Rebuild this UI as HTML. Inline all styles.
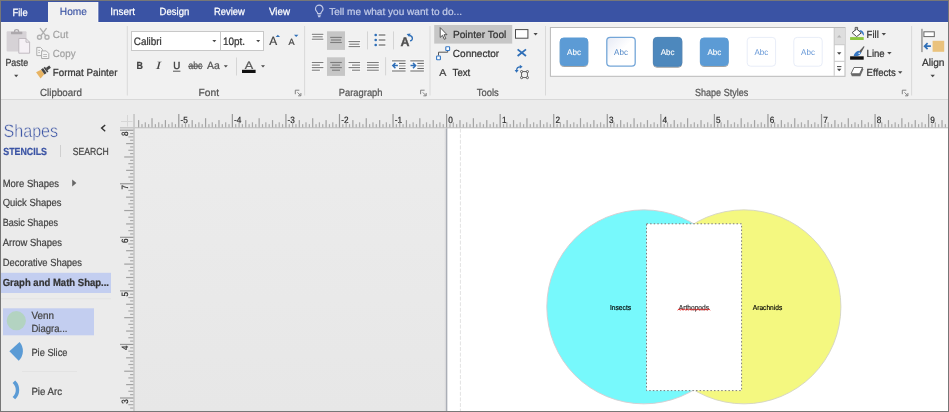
<!DOCTYPE html>
<html lang="en"><head><meta charset="utf-8"><title>Visio - Venn Diagram</title>
<style>
html,body{margin:0;padding:0;background:#fff;overflow:hidden}
#app{position:relative;width:949px;height:412px;overflow:hidden;font-family:"Liberation Sans", sans-serif}
svg{position:absolute;left:0;top:0;display:block;will-change:transform}
svg text{font-family:"Liberation Sans", sans-serif;white-space:pre;text-rendering:geometricPrecision}
</style></head><body>
<div id="app">
<svg width="949" height="412" viewBox="0 0 949 412">
<rect x="0" y="0" width="949" height="412" fill="#777" />
<rect x="1" y="1" width="947" height="410" fill="#ebebeb" />
<rect x="1" y="1" width="947" height="21" fill="#3a53a4" />
<rect x="1" y="22" width="947" height="77" fill="#f1f1f1" />
<rect x="1" y="22" width="947" height="1" fill="#f6f6f6" />
<rect x="1" y="99" width="947" height="1" fill="#d8d8d8" />
<rect x="48" y="2" width="50.2" height="21.5" fill="#f1f1f1" />
<rect x="97.2" y="2" width="1" height="20" fill="#f8f8f8" />
<text x="12.5" y="15.7" font-size="10.4" fill="#fff" font-weight="normal" font-style="normal" textLength="15.2" lengthAdjust="spacingAndGlyphs" stroke="#fff" stroke-width="0.25">File</text>
<text x="59.8" y="15.2" font-size="10.4" fill="#3a53a4" font-weight="normal" font-style="normal" textLength="27.1" lengthAdjust="spacingAndGlyphs" stroke="#3a53a4" stroke-width="0.15">Home</text>
<text x="110.3" y="15.2" font-size="10.4" fill="#fff" font-weight="normal" font-style="normal" textLength="24.8" lengthAdjust="spacingAndGlyphs" stroke="#fff" stroke-width="0.25">Insert</text>
<text x="159.6" y="15.2" font-size="10.4" fill="#fff" font-weight="normal" font-style="normal" textLength="29.7" lengthAdjust="spacingAndGlyphs" stroke="#fff" stroke-width="0.25">Design</text>
<text x="214" y="15.2" font-size="10.4" fill="#fff" font-weight="normal" font-style="normal" textLength="30.8" lengthAdjust="spacingAndGlyphs" stroke="#fff" stroke-width="0.25">Review</text>
<text x="269" y="15.2" font-size="10.4" fill="#fff" font-weight="normal" font-style="normal" textLength="21" lengthAdjust="spacingAndGlyphs" stroke="#fff" stroke-width="0.25">View</text>
<text x="329.2" y="15.3" font-size="10" fill="#c3cbe8" font-weight="normal" font-style="normal" textLength="132.8" lengthAdjust="spacingAndGlyphs"  stroke="#c3cbe8" stroke-width="0.22">Tell me what you want to do...</text>
<g fill="none" stroke="#c3cbe8" stroke-width="1.15"><path d="M317.7 13.6c0-1.7-2.2-2.6-2.2-4.7a3.75 3.75 0 0 1 7.5 0c0 2.1-2.2 3-2.2 4.7z"/><path d="M317.7 15.2h3.1M318.1 16.6h2.3"/></g>
<rect x="126.8" y="26" width="1" height="69.5" fill="#d9d9d9" />
<rect x="304.1" y="26" width="1" height="69.5" fill="#d9d9d9" />
<rect x="429.5" y="26" width="1" height="69.5" fill="#d9d9d9" />
<rect x="545.0" y="26" width="1" height="69.5" fill="#d9d9d9" />
<rect x="911.1" y="26" width="1" height="69.5" fill="#d9d9d9" />
<text x="40" y="95.6" font-size="10.3" fill="#555" font-weight="normal" font-style="normal" textLength="42" lengthAdjust="spacingAndGlyphs"  stroke="#555" stroke-width="0.22">Clipboard</text>
<text x="198.5" y="95.6" font-size="10.3" fill="#555" font-weight="normal" font-style="normal" textLength="20.5" lengthAdjust="spacingAndGlyphs"  stroke="#555" stroke-width="0.22">Font</text>
<text x="338.8" y="95.6" font-size="10.3" fill="#555" font-weight="normal" font-style="normal" textLength="43.7" lengthAdjust="spacingAndGlyphs"  stroke="#555" stroke-width="0.22">Paragraph</text>
<text x="476.7" y="95.6" font-size="10.3" fill="#555" font-weight="normal" font-style="normal" textLength="22" lengthAdjust="spacingAndGlyphs"  stroke="#555" stroke-width="0.22">Tools</text>
<text x="695" y="95.6" font-size="10.3" fill="#555" font-weight="normal" font-style="normal" textLength="53.3" lengthAdjust="spacingAndGlyphs"  stroke="#555" stroke-width="0.22">Shape Styles</text>
<g stroke="#777" stroke-width="0.9" fill="none"><path d="M295.3 94.2V90.2H299.3"/><path d="M297.5 92.4L300.6 95.5"/><path d="M300.90000000000003 93.0V95.8H298.1" /></g>
<g stroke="#777" stroke-width="0.9" fill="none"><path d="M420.6 94.2V90.2H424.6"/><path d="M422.8 92.4L425.90000000000003 95.5"/><path d="M426.20000000000005 93.0V95.8H423.40000000000003" /></g>
<g stroke="#777" stroke-width="0.9" fill="none"><path d="M902.3 94.2V90.2H906.3"/><path d="M904.5 92.4L907.5999999999999 95.5"/><path d="M907.9 93.0V95.8H905.0999999999999" /></g>
<g><rect x="6.6" y="31.3" width="19.9" height="20.2" rx="1" fill="#d6d2d6"/><rect x="11" y="31.7" width="11.3" height="2.5" rx="0.4" fill="#aca8ac"/><path d="M14.6 32v-0.8a2 1.6 0 0 1 4 0v0.8" fill="none" stroke="#aca8ac" stroke-width="1.3"/><path d="M18.8 38.5h7.2l3.6 3.7v11h-10.8z" fill="#f5f0f5" stroke="#bbb6bb" stroke-width="0.9"/><path d="M26 38.5v3.7h3.6" fill="none" stroke="#bbb6bb" stroke-width="0.9"/></g>
<text x="5.4" y="66.3" font-size="10.3" fill="#3c3c3c" font-weight="normal" font-style="normal" textLength="22.8" lengthAdjust="spacingAndGlyphs"  stroke="#3c3c3c" stroke-width="0.22">Paste</text>
<path d="M14.1 74.8h4.2l-2.1 2.4z" fill="#484848" stroke="none" stroke-width="1" />
<g fill="none" stroke="#b0b0b0" stroke-width="1.4"><path d="M40 28.2l5.6 7.4M46.6 28.2l-5.6 7.4"/><circle cx="39.5" cy="37.3" r="2"/><circle cx="47" cy="37.3" r="2"/></g>
<text x="52.8" y="37.7" font-size="10.3" fill="#a3a3a3" font-weight="normal" font-style="normal" textLength="15.5" lengthAdjust="spacingAndGlyphs"  stroke="#a3a3a3" stroke-width="0.22">Cut</text>
<g fill="#f5f5f5" stroke="#adadad" stroke-width="1"><path d="M36.8 47.4h3.6l2 2v6.2h-5.6z"/><path d="M41.6 50.9h4.6l2.6 2.6v5h-7.2z"/><path d="M38.2 50.4h1.8M38.2 52.6h1.8M43.2 54.5h3.8M43.2 56.5h3.8" fill="none" stroke-width="0.8"/></g>
<text x="52.8" y="57" font-size="10.3" fill="#a3a3a3" font-weight="normal" font-style="normal" textLength="22.7" lengthAdjust="spacingAndGlyphs"  stroke="#a3a3a3" stroke-width="0.22">Copy</text>
<g transform="rotate(-36 43.6 71.4)"><path d="M37 67.7l5.4 0.9v5.6l-5.4 1.1z" fill="#e8b463"/><rect x="42.6" y="68.4" width="2.5" height="6" fill="#454545"/><rect x="45.8" y="68.4" width="1.6" height="6" fill="#454545"/><rect x="47.4" y="70" width="4.2" height="2.8" fill="#454545"/></g>
<text x="52.8" y="76" font-size="10.3" fill="#333" font-weight="normal" font-style="normal" textLength="64.7" lengthAdjust="spacingAndGlyphs"  stroke="#333" stroke-width="0.22">Format Painter</text>
<rect x="131.5" y="31.5" width="89" height="19" fill="#fff" stroke="#c8c8c8" stroke-width="1"/>
<rect x="220.5" y="31.5" width="43" height="19" fill="#fff" stroke="#c8c8c8" stroke-width="1"/>
<text x="133.8" y="45.2" font-size="10.8" fill="#333" font-weight="normal" font-style="normal" textLength="28" lengthAdjust="spacingAndGlyphs"  stroke="#333" stroke-width="0.22">Calibri</text>
<text x="222.9" y="45.2" font-size="10.8" fill="#333" font-weight="normal" font-style="normal" textLength="22.1" lengthAdjust="spacingAndGlyphs"  stroke="#333" stroke-width="0.22">10pt.</text>
<path d="M212.3 40.1h4l-2.0 2.2z" fill="#484848" stroke="none" stroke-width="1" />
<path d="M256.2 40.1h4l-2.0 2.2z" fill="#484848" stroke="none" stroke-width="1" />
<text x="269.3" y="45.2" font-size="11.9" fill="#444" font-weight="normal" font-style="normal" textLength="7.9" lengthAdjust="spacingAndGlyphs"  stroke="#444" stroke-width="0.22">A</text>
<path d="M275.7 37.1l2.15-2.3 2.15 2.3z" fill="#2f6fb8" stroke="none" stroke-width="1" />
<text x="288.5" y="45.2" font-size="9" fill="#444" font-weight="normal" font-style="normal" textLength="6.1" lengthAdjust="spacingAndGlyphs"  stroke="#444" stroke-width="0.22">A</text>
<path d="M294 34.7h4.4l-2.2 2.3z" fill="#2f6fb8" stroke="none" stroke-width="1" />
<text x="136.5" y="69.4" font-size="10.3" fill="#444" font-weight="bold" font-style="normal" textLength="6.4" lengthAdjust="spacingAndGlyphs"  stroke="#444" stroke-width="0.22">B</text>
<text x="155.7" y="69.4" font-size="11" fill="#444" textLength="5.4" lengthAdjust="spacingAndGlyphs" style="font-family:'Liberation Serif',serif;font-style:italic">I</text>
<text x="173.2" y="69.4" font-size="10.3" fill="#444" font-weight="normal" font-style="normal" textLength="7" lengthAdjust="spacingAndGlyphs" stroke="#444" stroke-width="0.45">U</text>
<rect x="173" y="70.7" width="7.4" height="1" fill="#555" />
<text x="188.6" y="69.4" font-size="10.4" fill="#555" font-weight="normal" font-style="normal" textLength="13.6" lengthAdjust="spacingAndGlyphs"  stroke="#555" stroke-width="0.22">abc</text>
<rect x="188" y="65.7" width="14.8" height="1" fill="#555" />
<text x="207" y="69.4" font-size="10.5" fill="#555" font-weight="normal" font-style="normal" textLength="12.8" lengthAdjust="spacingAndGlyphs"  stroke="#555" stroke-width="0.22">Aa</text>
<path d="M223.8 65.30000000000001h4l-2.0 2.2z" fill="#484848" stroke="none" stroke-width="1" />
<rect x="236" y="57.5" width="1" height="18" fill="#d6d6d6" />
<text x="244.7" y="69" font-size="10.8" fill="#555" font-weight="normal" font-style="normal" textLength="8.4" lengthAdjust="spacingAndGlyphs"  stroke="#555" stroke-width="0.22">A</text>
<rect x="242" y="69.8" width="13.6" height="3.2" fill="#111" />
<path d="M261.0 65.30000000000001h4l-2.0 2.2z" fill="#484848" stroke="none" stroke-width="1" />
<rect x="327" y="31.3" width="18" height="18.6" fill="#c6c6c6" />
<rect x="327" y="57.3" width="18" height="18.6" fill="#c6c6c6" />
<rect x="311.0" y="33.0" width="13.2" height="2.6" fill="#fafafa" />
<rect x="311.7" y="35.5" width="11.8" height="2.6" fill="#fafafa" />
<rect x="311.0" y="37.9" width="13.2" height="2.6" fill="#fafafa" />
<rect x="311.8" y="33.75" width="11.6" height="1.1" fill="#7c7c7c" />
<rect x="312.5" y="36.25" width="10.2" height="1.1" fill="#7c7c7c" />
<rect x="311.8" y="38.65" width="11.6" height="1.1" fill="#7c7c7c" />
<rect x="330.2" y="36.85" width="11.6" height="1.1" fill="#7c7c7c" />
<rect x="330.9" y="39.45" width="10.2" height="1.1" fill="#7c7c7c" />
<rect x="330.2" y="41.95" width="11.6" height="1.1" fill="#7c7c7c" />
<rect x="347.7" y="40.3" width="13.2" height="2.6" fill="#fafafa" />
<rect x="348.4" y="42.9" width="11.8" height="2.6" fill="#fafafa" />
<rect x="347.7" y="45.3" width="13.2" height="2.6" fill="#fafafa" />
<rect x="348.5" y="41.05" width="11.6" height="1.1" fill="#7c7c7c" />
<rect x="349.2" y="43.65" width="10.2" height="1.1" fill="#7c7c7c" />
<rect x="348.5" y="46.05" width="11.6" height="1.1" fill="#7c7c7c" />
<rect x="367" y="31.4" width="1" height="18" fill="#d4d4d4" />
<rect x="378" y="33.5" width="8" height="3" fill="#fafafa" />
<rect x="378" y="38.5" width="8" height="3" fill="#fafafa" />
<rect x="378" y="43.5" width="8" height="3" fill="#fafafa" />
<circle cx="375.7" cy="35" r="1.3" fill="#2f6fb8"/>
<rect x="378.7" y="34.2" width="6.7" height="1.6" fill="#8c8c8c" />
<circle cx="375.7" cy="40" r="1.3" fill="#2f6fb8"/>
<rect x="378.7" y="39.2" width="6.7" height="1.6" fill="#8c8c8c" />
<circle cx="375.7" cy="45" r="1.3" fill="#2f6fb8"/>
<rect x="378.7" y="44.2" width="6.7" height="1.6" fill="#8c8c8c" />
<rect x="393" y="31.4" width="1" height="18" fill="#d4d4d4" />
<text x="400.5" y="46" font-size="12.4" fill="#4f4f4f" font-weight="bold" font-style="normal" textLength="9" lengthAdjust="spacingAndGlyphs" stroke="#4f4f4f" stroke-width="0.35">A</text>
<path d="M410 40.8c3-0.6 3.6-4 -0.6-5.6" fill="none" stroke="#2f6fb8" stroke-width="1.3" />
<path d="M406.6 34l4-0.6-1.4 3.6z" fill="#2f6fb8" stroke="none" stroke-width="1" />
<rect x="311.0" y="61.2" width="13.2" height="2.6" fill="#fafafa" />
<rect x="311.0" y="63.8" width="9.7" height="2.6" fill="#fafafa" />
<rect x="311.0" y="66.3" width="13.2" height="2.6" fill="#fafafa" />
<rect x="311.0" y="68.9" width="9.7" height="2.6" fill="#fafafa" />
<rect x="311.8" y="61.95" width="11.6" height="1.1" fill="#7c7c7c" />
<rect x="311.8" y="64.55" width="8.1" height="1.1" fill="#7c7c7c" />
<rect x="311.8" y="67.05" width="11.6" height="1.1" fill="#7c7c7c" />
<rect x="311.8" y="69.65" width="8.1" height="1.1" fill="#7c7c7c" />
<rect x="330.2" y="61.95" width="11.6" height="1.1" fill="#7c7c7c" />
<rect x="332.0" y="64.55" width="8" height="1.1" fill="#7c7c7c" />
<rect x="330.2" y="67.05" width="11.6" height="1.1" fill="#7c7c7c" />
<rect x="332.0" y="69.65" width="8" height="1.1" fill="#7c7c7c" />
<rect x="347.7" y="61.2" width="13.2" height="2.6" fill="#fafafa" />
<rect x="351.2" y="63.8" width="9.7" height="2.6" fill="#fafafa" />
<rect x="347.7" y="66.3" width="13.2" height="2.6" fill="#fafafa" />
<rect x="351.2" y="68.9" width="9.7" height="2.6" fill="#fafafa" />
<rect x="348.5" y="61.95" width="11.6" height="1.1" fill="#7c7c7c" />
<rect x="352.0" y="64.55" width="8.1" height="1.1" fill="#7c7c7c" />
<rect x="348.5" y="67.05" width="11.6" height="1.1" fill="#7c7c7c" />
<rect x="352.0" y="69.65" width="8.1" height="1.1" fill="#7c7c7c" />
<rect x="366.1" y="61.2" width="13.5" height="2.6" fill="#fafafa" />
<rect x="366.1" y="63.8" width="13.5" height="2.6" fill="#fafafa" />
<rect x="366.1" y="66.3" width="13.5" height="2.6" fill="#fafafa" />
<rect x="366.1" y="68.9" width="13.5" height="2.6" fill="#fafafa" />
<rect x="366.9" y="61.95" width="11.9" height="1.1" fill="#7c7c7c" />
<rect x="366.9" y="64.55" width="11.9" height="1.1" fill="#7c7c7c" />
<rect x="366.9" y="67.05" width="11.9" height="1.1" fill="#7c7c7c" />
<rect x="366.9" y="69.65" width="11.9" height="1.1" fill="#7c7c7c" />
<rect x="385.1" y="57.2" width="1" height="18.2" fill="#d4d4d4" />
<rect x="391.5" y="59.6" width="14.6" height="12.6" fill="#fafafa" />
<rect x="392" y="60" width="13.6" height="1.6" fill="#9c9c9c" />
<rect x="392" y="70.2" width="13.6" height="1.6" fill="#9c9c9c" />
<rect x="399" y="62.85" width="6.6" height="1.1" fill="#6a6a6a" />
<rect x="399" y="65.35000000000001" width="6.6" height="1.1" fill="#9c9c9c" />
<rect x="399" y="67.95" width="6.6" height="1.1" fill="#6a6a6a" />
<path d="M397.9 65.6H393M395.4 63L392.8 65.6L395.4 68.2" fill="none" stroke="#2f6fb8" stroke-width="1.5" />
<rect x="409.8" y="59.6" width="14.6" height="12.6" fill="#fafafa" />
<rect x="410.3" y="60" width="13.6" height="1.6" fill="#9c9c9c" />
<rect x="410.3" y="70.2" width="13.6" height="1.6" fill="#9c9c9c" />
<rect x="417.3" y="62.85" width="6.6" height="1.1" fill="#6a6a6a" />
<rect x="417.3" y="65.35000000000001" width="6.6" height="1.1" fill="#9c9c9c" />
<rect x="417.3" y="67.95" width="6.6" height="1.1" fill="#6a6a6a" />
<path d="M410.5 65.6H415.3M413.0 63L415.6 65.6L413.0 68.2" fill="none" stroke="#2f6fb8" stroke-width="1.5" />
<rect x="434.2" y="25" width="78" height="18.6" fill="#c6c6c6" />
<path d="M440.2 27.6v9.8l2.3-2.1 1.8 4 1.5-0.7-1.8-3.9h3z" fill="#fff" stroke="#4a4a4a" stroke-width="0.9" />
<text x="452.9" y="37.9" font-size="10.3" fill="#333" font-weight="normal" font-style="normal" textLength="53.5" lengthAdjust="spacingAndGlyphs"  stroke="#333" stroke-width="0.22">Pointer Tool</text>
<rect x="515.5" y="29.6" width="12.4" height="8.6" fill="#fff" stroke="#4a4a4a" stroke-width="1"/>
<path d="M533.5 33.05h4.2l-2.1 2.5z" fill="#484848" stroke="none" stroke-width="1" />
<g fill="#fff" stroke="#3577c4" stroke-width="1.1"><path d="M438.5 55.6v-3.4h9.2v-1.6" fill="none" stroke="#555" stroke-width="1"/><rect x="436.6" y="56" width="3.8" height="3.8" rx="0.6"/><rect x="445.8" y="46.7" width="3.8" height="3.8" rx="0.6"/></g>
<text x="452.8" y="57" font-size="10.3" fill="#333" font-weight="normal" font-style="normal" textLength="46.4" lengthAdjust="spacingAndGlyphs"  stroke="#333" stroke-width="0.22">Connector</text>
<path d="M517.6 49.4l8.4 6.6M526 49.4l-8.4 6.6" fill="none" stroke="#2f6fb8" stroke-width="1.8" />
<text x="439.2" y="75.6" font-size="10" fill="#444" font-weight="normal" font-style="normal" textLength="7.1" lengthAdjust="spacingAndGlyphs"  stroke="#444" stroke-width="0.22">A</text>
<text x="452.6" y="76.1" font-size="10.3" fill="#333" font-weight="normal" font-style="normal" textLength="17.7" lengthAdjust="spacingAndGlyphs"  stroke="#333" stroke-width="0.22">Text</text>
<g fill="#f1f1f1" stroke="#555" stroke-width="0.9"><rect x="521.6" y="71.6" width="5.8" height="6" fill="none"/><circle cx="521.6" cy="71.6" r="1.1"/><circle cx="527.4" cy="71.6" r="1.1"/><circle cx="521.6" cy="77.6" r="1.1"/><circle cx="527.4" cy="77.6" r="1.1"/></g>
<path d="M516.6 70.4c0-2.6 1.4-3.6 3.6-3.6" fill="none" stroke="#2f6fb8" stroke-width="1.3" />
<path d="M519.8 64.8l2.8 2-2.8 2z" fill="#2f6fb8" stroke="none" stroke-width="1" />
<path d="M514.6 70l2 2.8 2-2.8z" fill="#2f6fb8" stroke="none" stroke-width="1" />
<rect x="550.4" y="27.5" width="294.6" height="48.8" fill="#fff" stroke="#b9b9b9" stroke-width="1"/>
<defs><filter id="sh" x="-20%" y="-20%" width="140%" height="150%"><feGaussianBlur in="SourceAlpha" stdDeviation="0.7"/><feOffset dy="0.7"/><feComponentTransfer><feFuncA type="linear" slope="0.38"/></feComponentTransfer><feMerge><feMergeNode/><feMergeNode in="SourceGraphic"/></feMerge></filter><linearGradient id="g2" x1="0" y1="0" x2="1" y2="1"><stop offset="0" stop-color="#e6eaf5"/><stop offset="0.5" stop-color="#fff"/></linearGradient></defs>
<rect x="560.2" y="38" width="27.6" height="27.4" rx="3.4" fill="#5b9bd5" stroke="#5b9bd5" stroke-width="1" filter="url(#sh)"/>
<text x="567.1" y="54.7" font-size="8.3" fill="#fff" font-weight="normal" font-style="normal" textLength="13.8" lengthAdjust="spacingAndGlyphs" stroke="#fff" stroke-width="0.12">Abc</text>
<rect x="606.8" y="37.4" width="28.4" height="28.8" rx="3.4" fill="url(#g2)" stroke="#74a6d8" stroke-width="1.3"/>
<text x="614.1" y="54.7" font-size="8.3" fill="#4f86c6" font-weight="normal" font-style="normal" textLength="13.8" lengthAdjust="spacingAndGlyphs" stroke="none">Abc</text>
<rect x="653.4" y="37.4" width="28.4" height="28.8" rx="3.4" fill="#4e88bd" stroke="#4a82b6" stroke-width="1" filter="url(#sh)"/>
<text x="660.7" y="54.7" font-size="8.3" fill="#fff" font-weight="normal" font-style="normal" textLength="13.8" lengthAdjust="spacingAndGlyphs" stroke="#fff" stroke-width="0.12">Abc</text>
<rect x="700.4" y="38" width="27.8" height="27.4" rx="3.4" fill="#5b9bd5" stroke="#5b9bd5" stroke-width="1" filter="url(#sh)"/>
<text x="707.4" y="54.7" font-size="8.3" fill="#fff" font-weight="normal" font-style="normal" textLength="13.8" lengthAdjust="spacingAndGlyphs" stroke="#fff" stroke-width="0.12">Abc</text>
<rect x="747.2" y="37.4" width="28.4" height="28.8" rx="3.4" fill="#fff" stroke="#e8edf8" stroke-width="1"/>
<text x="754.5" y="54.7" font-size="8.3" fill="#6496d6" font-weight="normal" font-style="normal" textLength="13.8" lengthAdjust="spacingAndGlyphs" stroke="none">Abc</text>
<rect x="793.8" y="37.4" width="28.4" height="28.8" rx="3.4" fill="#fff" stroke="#e8edf8" stroke-width="1"/>
<text x="801.1" y="54.7" font-size="8.3" fill="#6496d6" font-weight="normal" font-style="normal" textLength="13.8" lengthAdjust="spacingAndGlyphs" stroke="none">Abc</text>
<rect x="834.2" y="28" width="10.3" height="16.4" fill="#dedede" />
<rect x="833.7" y="28" width="1" height="47.8" fill="#c6c6c6" />
<rect x="834.2" y="44.2" width="10.4" height="1" fill="#c6c6c6" />
<rect x="834.2" y="60.8" width="10.4" height="1" fill="#c6c6c6" />
<path d="M837 37.4h4.4l-2.2-2.5z" fill="#b4b4b4" stroke="none" stroke-width="1" />
<path d="M837.0 52.25h4.4l-2.2 2.5z" fill="#484848" stroke="none" stroke-width="1" />
<rect x="837" y="66.1" width="4.4" height="1" fill="#484848" />
<path d="M837.0 68.75h4.4l-2.2 2.5z" fill="#484848" stroke="none" stroke-width="1" />
<g><rect x="850.1" y="37.1" width="13.6" height="2.9" fill="#8cc63f"/><path d="M852.1 32.7l4.5-3.7 4.7 3.9-4.7 3.7z" fill="#fff" stroke="#4a4a4a" stroke-width="1"/><path d="M855.2 30.4v-3h2.4v2.4" fill="none" stroke="#4a4a4a" stroke-width="0.9"/><path d="M859.4 29.9c3.2 0.2 4.9 2.4 4.5 5.9-1.6-1.3-1.4-3-3.7-4z" fill="#3577c4"/></g>
<text x="866.6" y="37.9" font-size="10.3" fill="#333" font-weight="normal" font-style="normal" textLength="12.2" lengthAdjust="spacingAndGlyphs"  stroke="#333" stroke-width="0.22">Fill</text>
<path d="M881.5999999999999 33.05h4.4l-2.2 2.5z" fill="#484848" stroke="none" stroke-width="1" />
<g><rect x="850.1" y="56.3" width="13.6" height="3.4" fill="#111"/><path d="M863.9 46l-4.9 5.5 1.9 1.7 3.6-6.4z" fill="#5c5c5c"/><path d="M853.6 56c0.6-3 2.8-5 5.3-5.3l2.2 2c-0.4 2.2-3.3 3.8-7.5 3.3z" fill="#3577c4"/><circle cx="859.2" cy="53.2" r="0.8" fill="#fff"/></g>
<text x="866.6" y="57" font-size="10.3" fill="#333" font-weight="normal" font-style="normal" textLength="18.1" lengthAdjust="spacingAndGlyphs"  stroke="#333" stroke-width="0.22">Line</text>
<path d="M887.1999999999999 52.05h4.4l-2.2 2.5z" fill="#484848" stroke="none" stroke-width="1" />
<g><path d="M851 74.2l0.9 2h8.4l3-6.6-0.8-2.2z" fill="#6e6e6e"/><path d="M854 67.5h8.6l-3 6.3h-8.6z" fill="#fff" stroke="#5a5a5a" stroke-width="0.9" stroke-linejoin="round"/></g>
<text x="866.6" y="76.3" font-size="10.3" fill="#333" font-weight="normal" font-style="normal" textLength="29.1" lengthAdjust="spacingAndGlyphs"  stroke="#333" stroke-width="0.22">Effects</text>
<path d="M898.0 71.25h4.4l-2.2 2.5z" fill="#484848" stroke="none" stroke-width="1" />
<g><rect x="921.3" y="28.8" width="1.3" height="23.3" fill="#8a8a8a"/><rect x="923.9" y="31.8" width="10.4" height="4.8" fill="#fff" stroke="#666" stroke-width="1"/><rect x="932.6" y="40.8" width="11.6" height="11" fill="#eac27c"/><path d="M930.9 46.2h-5.6M927.6 43.2l-3 3 3 3" fill="none" stroke="#2f6fb8" stroke-width="1.7"/></g>
<text x="921.9" y="66.4" font-size="10.4" fill="#333" font-weight="normal" font-style="normal" textLength="22.6" lengthAdjust="spacingAndGlyphs"  stroke="#333" stroke-width="0.22">Align</text>
<path d="M930.5 74.65h4.4l-2.2 2.5z" fill="#484848" stroke="none" stroke-width="1" />
<text x="3.4" y="136.6" font-size="18" fill="#3a53a4" font-weight="normal" font-style="normal" textLength="54.8" lengthAdjust="spacingAndGlyphs" stroke="#ebebeb" stroke-width="0.45">Shapes</text>
<path d="M105.2 125l-3.6 3.1 3.6 3.1" fill="none" stroke="#333" stroke-width="1.4" />
<text x="3.3" y="154.8" font-size="10.3" fill="#3a53a4" font-weight="bold" font-style="normal" textLength="43.7" lengthAdjust="spacingAndGlyphs"  stroke="#3a53a4" stroke-width="0.22">STENCILS</text>
<rect x="60" y="145" width="1" height="12" fill="#cfcfcf" />
<text x="72.7" y="154.8" font-size="10.3" fill="#444" font-weight="normal" font-style="normal" textLength="36" lengthAdjust="spacingAndGlyphs"  stroke="#444" stroke-width="0.22">SEARCH</text>
<text x="2.7" y="186.9" font-size="10.4" fill="#444" font-weight="normal" font-style="normal" textLength="56.3" lengthAdjust="spacingAndGlyphs"  stroke="#444" stroke-width="0.22">More Shapes</text>
<path d="M72.2 179.4v7.2l4.2-3.6z" fill="#666" stroke="none" stroke-width="1" />
<text x="2.7" y="206" font-size="10.4" fill="#444" font-weight="normal" font-style="normal" textLength="58.7" lengthAdjust="spacingAndGlyphs"  stroke="#444" stroke-width="0.22">Quick Shapes</text>
<text x="2.7" y="226.3" font-size="10.4" fill="#444" font-weight="normal" font-style="normal" textLength="55.3" lengthAdjust="spacingAndGlyphs"  stroke="#444" stroke-width="0.22">Basic Shapes</text>
<text x="2.7" y="246.3" font-size="10.4" fill="#444" font-weight="normal" font-style="normal" textLength="59.3" lengthAdjust="spacingAndGlyphs"  stroke="#444" stroke-width="0.22">Arrow Shapes</text>
<text x="2.7" y="266.2" font-size="10.4" fill="#444" font-weight="normal" font-style="normal" textLength="79.3" lengthAdjust="spacingAndGlyphs"  stroke="#444" stroke-width="0.22">Decorative Shapes</text>
<rect x="1" y="272.8" width="110" height="20.2" fill="#c3cef0" />
<text x="2.7" y="286.2" font-size="10.4" fill="#333" font-weight="bold" font-style="normal" textLength="106.3" lengthAdjust="spacingAndGlyphs"  stroke="#333" stroke-width="0.22">Graph and Math Shap...</text>
<rect x="1" y="298.3" width="110" height="1" fill="#e3e3e3" />
<rect x="3" y="308.3" width="91" height="27" fill="#c3cef0" />
<circle cx="16.3" cy="320.7" r="9.6" fill="#b3d3c1"/>
<text x="31.4" y="318.8" font-size="10.4" fill="#444" font-weight="normal" font-style="normal" textLength="22.5" lengthAdjust="spacingAndGlyphs"  stroke="#444" stroke-width="0.22">Venn</text>
<text x="31.4" y="331.5" font-size="10.4" fill="#444" font-weight="normal" font-style="normal" textLength="36.1" lengthAdjust="spacingAndGlyphs"  stroke="#444" stroke-width="0.22">Diagra...</text>
<path d="M9.4 351.3L19.6 342A13.6 13.6 0 0 1 18.7 360.7z" fill="#5b9bd5" stroke="none" stroke-width="1" />
<text x="31.4" y="356.2" font-size="10.4" fill="#444" font-weight="normal" font-style="normal" textLength="36.1" lengthAdjust="spacingAndGlyphs"  stroke="#444" stroke-width="0.22">Pie Slice</text>
<rect x="22" y="371" width="55" height="1" fill="#e3e3e3" />
<path d="M15.2 380.6A12.8 12.8 0 0 1 15.2 399.2L12.6 397A9.3 9.3 0 0 0 12.6 383z" fill="#5b9bd5" stroke="none" stroke-width="1" />
<text x="31.4" y="394.6" font-size="10.4" fill="#444" font-weight="normal" font-style="normal" textLength="30.6" lengthAdjust="spacingAndGlyphs"  stroke="#444" stroke-width="0.22">Pie Arc</text>
<rect x="127" y="115" width="1" height="11.5" fill="#d6d6d6" />
<rect x="121" y="121" width="11.5" height="1" fill="#d6d6d6" />
<rect x="120" y="127" width="828" height="1.6" fill="#c8c8c8" />
<rect x="133.2" y="114" width="1.7" height="297" fill="#c8c8c8" />
<rect x="138.03" y="120.1" width="1.2" height="7.3" fill="#a2a2a2" />
<rect x="141.38" y="124.1" width="1.2" height="3.3" fill="#aaaaaa" />
<rect x="144.72" y="122.3" width="1.2" height="5.1" fill="#aaaaaa" />
<rect x="148.07" y="124.1" width="1.2" height="3.3" fill="#aaaaaa" />
<rect x="151.42" y="118.2" width="1.2" height="9.2" fill="#a2a2a2" />
<rect x="154.77" y="124.1" width="1.2" height="3.3" fill="#aaaaaa" />
<rect x="158.12" y="122.3" width="1.2" height="5.1" fill="#aaaaaa" />
<rect x="161.46" y="124.1" width="1.2" height="3.3" fill="#aaaaaa" />
<rect x="164.81" y="120.1" width="1.2" height="7.3" fill="#a2a2a2" />
<rect x="168.16" y="124.1" width="1.2" height="3.3" fill="#aaaaaa" />
<rect x="171.51" y="122.3" width="1.2" height="5.1" fill="#aaaaaa" />
<rect x="174.85" y="124.1" width="1.2" height="3.3" fill="#aaaaaa" />
<rect x="178.2" y="114.0" width="1.2" height="13.4" fill="#989898" />
<text x="180.5" y="122.9" font-size="9.1" fill="#2a2a2a" font-weight="normal" font-style="normal" textLength="7.3" lengthAdjust="spacingAndGlyphs" stroke="#2a2a2a" stroke-width="0.2">-5</text>
<rect x="181.55" y="124.1" width="1.2" height="3.3" fill="#aaaaaa" />
<rect x="184.9" y="122.3" width="1.2" height="5.1" fill="#aaaaaa" />
<rect x="188.24" y="124.1" width="1.2" height="3.3" fill="#aaaaaa" />
<rect x="191.59" y="120.1" width="1.2" height="7.3" fill="#a2a2a2" />
<rect x="194.94" y="124.1" width="1.2" height="3.3" fill="#aaaaaa" />
<rect x="198.29" y="122.3" width="1.2" height="5.1" fill="#aaaaaa" />
<rect x="201.63" y="124.1" width="1.2" height="3.3" fill="#aaaaaa" />
<rect x="204.98" y="118.2" width="1.2" height="9.2" fill="#a2a2a2" />
<rect x="208.33" y="124.1" width="1.2" height="3.3" fill="#aaaaaa" />
<rect x="211.68" y="122.3" width="1.2" height="5.1" fill="#aaaaaa" />
<rect x="215.02" y="124.1" width="1.2" height="3.3" fill="#aaaaaa" />
<rect x="218.37" y="120.1" width="1.2" height="7.3" fill="#a2a2a2" />
<rect x="221.72" y="124.1" width="1.2" height="3.3" fill="#aaaaaa" />
<rect x="225.07" y="122.3" width="1.2" height="5.1" fill="#aaaaaa" />
<rect x="228.41" y="124.1" width="1.2" height="3.3" fill="#aaaaaa" />
<rect x="231.76" y="114.0" width="1.2" height="13.4" fill="#989898" />
<text x="234.1" y="122.9" font-size="9.1" fill="#2a2a2a" font-weight="normal" font-style="normal" textLength="7.3" lengthAdjust="spacingAndGlyphs" stroke="#2a2a2a" stroke-width="0.2">-4</text>
<rect x="235.11" y="124.1" width="1.2" height="3.3" fill="#aaaaaa" />
<rect x="238.46" y="122.3" width="1.2" height="5.1" fill="#aaaaaa" />
<rect x="241.8" y="124.1" width="1.2" height="3.3" fill="#aaaaaa" />
<rect x="245.15" y="120.1" width="1.2" height="7.3" fill="#a2a2a2" />
<rect x="248.5" y="124.1" width="1.2" height="3.3" fill="#aaaaaa" />
<rect x="251.85" y="122.3" width="1.2" height="5.1" fill="#aaaaaa" />
<rect x="255.19" y="124.1" width="1.2" height="3.3" fill="#aaaaaa" />
<rect x="258.54" y="118.2" width="1.2" height="9.2" fill="#a2a2a2" />
<rect x="261.89" y="124.1" width="1.2" height="3.3" fill="#aaaaaa" />
<rect x="265.24" y="122.3" width="1.2" height="5.1" fill="#aaaaaa" />
<rect x="268.58" y="124.1" width="1.2" height="3.3" fill="#aaaaaa" />
<rect x="271.93" y="120.1" width="1.2" height="7.3" fill="#a2a2a2" />
<rect x="275.28" y="124.1" width="1.2" height="3.3" fill="#aaaaaa" />
<rect x="278.62" y="122.3" width="1.2" height="5.1" fill="#aaaaaa" />
<rect x="281.97" y="124.1" width="1.2" height="3.3" fill="#aaaaaa" />
<rect x="285.32" y="114.0" width="1.2" height="13.4" fill="#989898" />
<text x="287.6" y="122.9" font-size="9.1" fill="#2a2a2a" font-weight="normal" font-style="normal" textLength="7.3" lengthAdjust="spacingAndGlyphs" stroke="#2a2a2a" stroke-width="0.2">-3</text>
<rect x="288.67" y="124.1" width="1.2" height="3.3" fill="#aaaaaa" />
<rect x="292.01" y="122.3" width="1.2" height="5.1" fill="#aaaaaa" />
<rect x="295.36" y="124.1" width="1.2" height="3.3" fill="#aaaaaa" />
<rect x="298.71" y="120.1" width="1.2" height="7.3" fill="#a2a2a2" />
<rect x="302.06" y="124.1" width="1.2" height="3.3" fill="#aaaaaa" />
<rect x="305.4" y="122.3" width="1.2" height="5.1" fill="#aaaaaa" />
<rect x="308.75" y="124.1" width="1.2" height="3.3" fill="#aaaaaa" />
<rect x="312.1" y="118.2" width="1.2" height="9.2" fill="#a2a2a2" />
<rect x="315.45" y="124.1" width="1.2" height="3.3" fill="#aaaaaa" />
<rect x="318.79" y="122.3" width="1.2" height="5.1" fill="#aaaaaa" />
<rect x="322.14" y="124.1" width="1.2" height="3.3" fill="#aaaaaa" />
<rect x="325.49" y="120.1" width="1.2" height="7.3" fill="#a2a2a2" />
<rect x="328.84" y="124.1" width="1.2" height="3.3" fill="#aaaaaa" />
<rect x="332.19" y="122.3" width="1.2" height="5.1" fill="#aaaaaa" />
<rect x="335.53" y="124.1" width="1.2" height="3.3" fill="#aaaaaa" />
<rect x="338.88" y="114.0" width="1.2" height="13.4" fill="#989898" />
<text x="341.2" y="122.9" font-size="9.1" fill="#2a2a2a" font-weight="normal" font-style="normal" textLength="7.3" lengthAdjust="spacingAndGlyphs" stroke="#2a2a2a" stroke-width="0.2">-2</text>
<rect x="342.23" y="124.1" width="1.2" height="3.3" fill="#aaaaaa" />
<rect x="345.57" y="122.3" width="1.2" height="5.1" fill="#aaaaaa" />
<rect x="348.92" y="124.1" width="1.2" height="3.3" fill="#aaaaaa" />
<rect x="352.27" y="120.1" width="1.2" height="7.3" fill="#a2a2a2" />
<rect x="355.62" y="124.1" width="1.2" height="3.3" fill="#aaaaaa" />
<rect x="358.97" y="122.3" width="1.2" height="5.1" fill="#aaaaaa" />
<rect x="362.31" y="124.1" width="1.2" height="3.3" fill="#aaaaaa" />
<rect x="365.66" y="118.2" width="1.2" height="9.2" fill="#a2a2a2" />
<rect x="369.01" y="124.1" width="1.2" height="3.3" fill="#aaaaaa" />
<rect x="372.36" y="122.3" width="1.2" height="5.1" fill="#aaaaaa" />
<rect x="375.7" y="124.1" width="1.2" height="3.3" fill="#aaaaaa" />
<rect x="379.05" y="120.1" width="1.2" height="7.3" fill="#a2a2a2" />
<rect x="382.4" y="124.1" width="1.2" height="3.3" fill="#aaaaaa" />
<rect x="385.75" y="122.3" width="1.2" height="5.1" fill="#aaaaaa" />
<rect x="389.09" y="124.1" width="1.2" height="3.3" fill="#aaaaaa" />
<rect x="392.44" y="114.0" width="1.2" height="13.4" fill="#989898" />
<text x="394.7" y="122.9" font-size="9.1" fill="#2a2a2a" font-weight="normal" font-style="normal" textLength="7.3" lengthAdjust="spacingAndGlyphs" stroke="#2a2a2a" stroke-width="0.2">-1</text>
<rect x="395.79" y="124.1" width="1.2" height="3.3" fill="#aaaaaa" />
<rect x="399.13" y="122.3" width="1.2" height="5.1" fill="#aaaaaa" />
<rect x="402.48" y="124.1" width="1.2" height="3.3" fill="#aaaaaa" />
<rect x="405.83" y="120.1" width="1.2" height="7.3" fill="#a2a2a2" />
<rect x="409.18" y="124.1" width="1.2" height="3.3" fill="#aaaaaa" />
<rect x="412.52" y="122.3" width="1.2" height="5.1" fill="#aaaaaa" />
<rect x="415.87" y="124.1" width="1.2" height="3.3" fill="#aaaaaa" />
<rect x="419.22" y="118.2" width="1.2" height="9.2" fill="#a2a2a2" />
<rect x="422.57" y="124.1" width="1.2" height="3.3" fill="#aaaaaa" />
<rect x="425.92" y="122.3" width="1.2" height="5.1" fill="#aaaaaa" />
<rect x="429.26" y="124.1" width="1.2" height="3.3" fill="#aaaaaa" />
<rect x="432.61" y="120.1" width="1.2" height="7.3" fill="#a2a2a2" />
<rect x="435.96" y="124.1" width="1.2" height="3.3" fill="#aaaaaa" />
<rect x="439.31" y="122.3" width="1.2" height="5.1" fill="#aaaaaa" />
<rect x="442.65" y="124.1" width="1.2" height="3.3" fill="#aaaaaa" />
<rect x="446.0" y="114.0" width="1.2" height="13.4" fill="#989898" />
<text x="448.3" y="122.9" font-size="9.1" fill="#2a2a2a" font-weight="normal" font-style="normal" textLength="4.6" lengthAdjust="spacingAndGlyphs" stroke="#2a2a2a" stroke-width="0.2">0</text>
<rect x="449.35" y="124.1" width="1.2" height="3.3" fill="#aaaaaa" />
<rect x="452.69" y="122.3" width="1.2" height="5.1" fill="#aaaaaa" />
<rect x="456.04" y="124.1" width="1.2" height="3.3" fill="#aaaaaa" />
<rect x="459.39" y="120.1" width="1.2" height="7.3" fill="#a2a2a2" />
<rect x="462.74" y="124.1" width="1.2" height="3.3" fill="#aaaaaa" />
<rect x="466.08" y="122.3" width="1.2" height="5.1" fill="#aaaaaa" />
<rect x="469.43" y="124.1" width="1.2" height="3.3" fill="#aaaaaa" />
<rect x="472.78" y="118.2" width="1.2" height="9.2" fill="#a2a2a2" />
<rect x="476.13" y="124.1" width="1.2" height="3.3" fill="#aaaaaa" />
<rect x="479.48" y="122.3" width="1.2" height="5.1" fill="#aaaaaa" />
<rect x="482.82" y="124.1" width="1.2" height="3.3" fill="#aaaaaa" />
<rect x="486.17" y="120.1" width="1.2" height="7.3" fill="#a2a2a2" />
<rect x="489.52" y="124.1" width="1.2" height="3.3" fill="#aaaaaa" />
<rect x="492.87" y="122.3" width="1.2" height="5.1" fill="#aaaaaa" />
<rect x="496.21" y="124.1" width="1.2" height="3.3" fill="#aaaaaa" />
<rect x="499.56" y="114.0" width="1.2" height="13.4" fill="#989898" />
<text x="501.9" y="122.9" font-size="9.1" fill="#2a2a2a" font-weight="normal" font-style="normal" textLength="4.6" lengthAdjust="spacingAndGlyphs" stroke="#2a2a2a" stroke-width="0.2">1</text>
<rect x="502.91" y="124.1" width="1.2" height="3.3" fill="#aaaaaa" />
<rect x="506.25" y="122.3" width="1.2" height="5.1" fill="#aaaaaa" />
<rect x="509.6" y="124.1" width="1.2" height="3.3" fill="#aaaaaa" />
<rect x="512.95" y="120.1" width="1.2" height="7.3" fill="#a2a2a2" />
<rect x="516.3" y="124.1" width="1.2" height="3.3" fill="#aaaaaa" />
<rect x="519.64" y="122.3" width="1.2" height="5.1" fill="#aaaaaa" />
<rect x="522.99" y="124.1" width="1.2" height="3.3" fill="#aaaaaa" />
<rect x="526.34" y="118.2" width="1.2" height="9.2" fill="#a2a2a2" />
<rect x="529.69" y="124.1" width="1.2" height="3.3" fill="#aaaaaa" />
<rect x="533.03" y="122.3" width="1.2" height="5.1" fill="#aaaaaa" />
<rect x="536.38" y="124.1" width="1.2" height="3.3" fill="#aaaaaa" />
<rect x="539.73" y="120.1" width="1.2" height="7.3" fill="#a2a2a2" />
<rect x="543.08" y="124.1" width="1.2" height="3.3" fill="#aaaaaa" />
<rect x="546.43" y="122.3" width="1.2" height="5.1" fill="#aaaaaa" />
<rect x="549.77" y="124.1" width="1.2" height="3.3" fill="#aaaaaa" />
<rect x="553.12" y="114.0" width="1.2" height="13.4" fill="#989898" />
<text x="555.4" y="122.9" font-size="9.1" fill="#2a2a2a" font-weight="normal" font-style="normal" textLength="4.6" lengthAdjust="spacingAndGlyphs" stroke="#2a2a2a" stroke-width="0.2">2</text>
<rect x="556.47" y="124.1" width="1.2" height="3.3" fill="#aaaaaa" />
<rect x="559.81" y="122.3" width="1.2" height="5.1" fill="#aaaaaa" />
<rect x="563.16" y="124.1" width="1.2" height="3.3" fill="#aaaaaa" />
<rect x="566.51" y="120.1" width="1.2" height="7.3" fill="#a2a2a2" />
<rect x="569.86" y="124.1" width="1.2" height="3.3" fill="#aaaaaa" />
<rect x="573.21" y="122.3" width="1.2" height="5.1" fill="#aaaaaa" />
<rect x="576.55" y="124.1" width="1.2" height="3.3" fill="#aaaaaa" />
<rect x="579.9" y="118.2" width="1.2" height="9.2" fill="#a2a2a2" />
<rect x="583.25" y="124.1" width="1.2" height="3.3" fill="#aaaaaa" />
<rect x="586.6" y="122.3" width="1.2" height="5.1" fill="#aaaaaa" />
<rect x="589.94" y="124.1" width="1.2" height="3.3" fill="#aaaaaa" />
<rect x="593.29" y="120.1" width="1.2" height="7.3" fill="#a2a2a2" />
<rect x="596.64" y="124.1" width="1.2" height="3.3" fill="#aaaaaa" />
<rect x="599.99" y="122.3" width="1.2" height="5.1" fill="#aaaaaa" />
<rect x="603.33" y="124.1" width="1.2" height="3.3" fill="#aaaaaa" />
<rect x="606.68" y="114.0" width="1.2" height="13.4" fill="#989898" />
<text x="609.0" y="122.9" font-size="9.1" fill="#2a2a2a" font-weight="normal" font-style="normal" textLength="4.6" lengthAdjust="spacingAndGlyphs" stroke="#2a2a2a" stroke-width="0.2">3</text>
<rect x="610.03" y="124.1" width="1.2" height="3.3" fill="#aaaaaa" />
<rect x="613.38" y="122.3" width="1.2" height="5.1" fill="#aaaaaa" />
<rect x="616.72" y="124.1" width="1.2" height="3.3" fill="#aaaaaa" />
<rect x="620.07" y="120.1" width="1.2" height="7.3" fill="#a2a2a2" />
<rect x="623.42" y="124.1" width="1.2" height="3.3" fill="#aaaaaa" />
<rect x="626.76" y="122.3" width="1.2" height="5.1" fill="#aaaaaa" />
<rect x="630.11" y="124.1" width="1.2" height="3.3" fill="#aaaaaa" />
<rect x="633.46" y="118.2" width="1.2" height="9.2" fill="#a2a2a2" />
<rect x="636.81" y="124.1" width="1.2" height="3.3" fill="#aaaaaa" />
<rect x="640.15" y="122.3" width="1.2" height="5.1" fill="#aaaaaa" />
<rect x="643.5" y="124.1" width="1.2" height="3.3" fill="#aaaaaa" />
<rect x="646.85" y="120.1" width="1.2" height="7.3" fill="#a2a2a2" />
<rect x="650.2" y="124.1" width="1.2" height="3.3" fill="#aaaaaa" />
<rect x="653.54" y="122.3" width="1.2" height="5.1" fill="#aaaaaa" />
<rect x="656.89" y="124.1" width="1.2" height="3.3" fill="#aaaaaa" />
<rect x="660.24" y="114.0" width="1.2" height="13.4" fill="#989898" />
<text x="662.5" y="122.9" font-size="9.1" fill="#2a2a2a" font-weight="normal" font-style="normal" textLength="4.6" lengthAdjust="spacingAndGlyphs" stroke="#2a2a2a" stroke-width="0.2">4</text>
<rect x="663.59" y="124.1" width="1.2" height="3.3" fill="#aaaaaa" />
<rect x="666.94" y="122.3" width="1.2" height="5.1" fill="#aaaaaa" />
<rect x="670.28" y="124.1" width="1.2" height="3.3" fill="#aaaaaa" />
<rect x="673.63" y="120.1" width="1.2" height="7.3" fill="#a2a2a2" />
<rect x="676.98" y="124.1" width="1.2" height="3.3" fill="#aaaaaa" />
<rect x="680.33" y="122.3" width="1.2" height="5.1" fill="#aaaaaa" />
<rect x="683.67" y="124.1" width="1.2" height="3.3" fill="#aaaaaa" />
<rect x="687.02" y="118.2" width="1.2" height="9.2" fill="#a2a2a2" />
<rect x="690.37" y="124.1" width="1.2" height="3.3" fill="#aaaaaa" />
<rect x="693.72" y="122.3" width="1.2" height="5.1" fill="#aaaaaa" />
<rect x="697.06" y="124.1" width="1.2" height="3.3" fill="#aaaaaa" />
<rect x="700.41" y="120.1" width="1.2" height="7.3" fill="#a2a2a2" />
<rect x="703.76" y="124.1" width="1.2" height="3.3" fill="#aaaaaa" />
<rect x="707.11" y="122.3" width="1.2" height="5.1" fill="#aaaaaa" />
<rect x="710.45" y="124.1" width="1.2" height="3.3" fill="#aaaaaa" />
<rect x="713.8" y="114.0" width="1.2" height="13.4" fill="#989898" />
<text x="716.1" y="122.9" font-size="9.1" fill="#2a2a2a" font-weight="normal" font-style="normal" textLength="4.6" lengthAdjust="spacingAndGlyphs" stroke="#2a2a2a" stroke-width="0.2">5</text>
<rect x="717.15" y="124.1" width="1.2" height="3.3" fill="#aaaaaa" />
<rect x="720.5" y="122.3" width="1.2" height="5.1" fill="#aaaaaa" />
<rect x="723.84" y="124.1" width="1.2" height="3.3" fill="#aaaaaa" />
<rect x="727.19" y="120.1" width="1.2" height="7.3" fill="#a2a2a2" />
<rect x="730.54" y="124.1" width="1.2" height="3.3" fill="#aaaaaa" />
<rect x="733.88" y="122.3" width="1.2" height="5.1" fill="#aaaaaa" />
<rect x="737.23" y="124.1" width="1.2" height="3.3" fill="#aaaaaa" />
<rect x="740.58" y="118.2" width="1.2" height="9.2" fill="#a2a2a2" />
<rect x="743.93" y="124.1" width="1.2" height="3.3" fill="#aaaaaa" />
<rect x="747.27" y="122.3" width="1.2" height="5.1" fill="#aaaaaa" />
<rect x="750.62" y="124.1" width="1.2" height="3.3" fill="#aaaaaa" />
<rect x="753.97" y="120.1" width="1.2" height="7.3" fill="#a2a2a2" />
<rect x="757.32" y="124.1" width="1.2" height="3.3" fill="#aaaaaa" />
<rect x="760.67" y="122.3" width="1.2" height="5.1" fill="#aaaaaa" />
<rect x="764.01" y="124.1" width="1.2" height="3.3" fill="#aaaaaa" />
<rect x="767.36" y="114.0" width="1.2" height="13.4" fill="#989898" />
<text x="769.7" y="122.9" font-size="9.1" fill="#2a2a2a" font-weight="normal" font-style="normal" textLength="4.6" lengthAdjust="spacingAndGlyphs" stroke="#2a2a2a" stroke-width="0.2">6</text>
<rect x="770.71" y="124.1" width="1.2" height="3.3" fill="#aaaaaa" />
<rect x="774.05" y="122.3" width="1.2" height="5.1" fill="#aaaaaa" />
<rect x="777.4" y="124.1" width="1.2" height="3.3" fill="#aaaaaa" />
<rect x="780.75" y="120.1" width="1.2" height="7.3" fill="#a2a2a2" />
<rect x="784.1" y="124.1" width="1.2" height="3.3" fill="#aaaaaa" />
<rect x="787.45" y="122.3" width="1.2" height="5.1" fill="#aaaaaa" />
<rect x="790.79" y="124.1" width="1.2" height="3.3" fill="#aaaaaa" />
<rect x="794.14" y="118.2" width="1.2" height="9.2" fill="#a2a2a2" />
<rect x="797.49" y="124.1" width="1.2" height="3.3" fill="#aaaaaa" />
<rect x="800.84" y="122.3" width="1.2" height="5.1" fill="#aaaaaa" />
<rect x="804.18" y="124.1" width="1.2" height="3.3" fill="#aaaaaa" />
<rect x="807.53" y="120.1" width="1.2" height="7.3" fill="#a2a2a2" />
<rect x="810.88" y="124.1" width="1.2" height="3.3" fill="#aaaaaa" />
<rect x="814.23" y="122.3" width="1.2" height="5.1" fill="#aaaaaa" />
<rect x="817.57" y="124.1" width="1.2" height="3.3" fill="#aaaaaa" />
<rect x="820.92" y="114.0" width="1.2" height="13.4" fill="#989898" />
<text x="823.2" y="122.9" font-size="9.1" fill="#2a2a2a" font-weight="normal" font-style="normal" textLength="4.6" lengthAdjust="spacingAndGlyphs" stroke="#2a2a2a" stroke-width="0.2">7</text>
<rect x="824.27" y="124.1" width="1.2" height="3.3" fill="#aaaaaa" />
<rect x="827.62" y="122.3" width="1.2" height="5.1" fill="#aaaaaa" />
<rect x="830.96" y="124.1" width="1.2" height="3.3" fill="#aaaaaa" />
<rect x="834.31" y="120.1" width="1.2" height="7.3" fill="#a2a2a2" />
<rect x="837.66" y="124.1" width="1.2" height="3.3" fill="#aaaaaa" />
<rect x="841.0" y="122.3" width="1.2" height="5.1" fill="#aaaaaa" />
<rect x="844.35" y="124.1" width="1.2" height="3.3" fill="#aaaaaa" />
<rect x="847.7" y="118.2" width="1.2" height="9.2" fill="#a2a2a2" />
<rect x="851.05" y="124.1" width="1.2" height="3.3" fill="#aaaaaa" />
<rect x="854.4" y="122.3" width="1.2" height="5.1" fill="#aaaaaa" />
<rect x="857.74" y="124.1" width="1.2" height="3.3" fill="#aaaaaa" />
<rect x="861.09" y="120.1" width="1.2" height="7.3" fill="#a2a2a2" />
<rect x="864.44" y="124.1" width="1.2" height="3.3" fill="#aaaaaa" />
<rect x="867.78" y="122.3" width="1.2" height="5.1" fill="#aaaaaa" />
<rect x="871.13" y="124.1" width="1.2" height="3.3" fill="#aaaaaa" />
<rect x="874.48" y="114.0" width="1.2" height="13.4" fill="#989898" />
<text x="876.8" y="122.9" font-size="9.1" fill="#2a2a2a" font-weight="normal" font-style="normal" textLength="4.6" lengthAdjust="spacingAndGlyphs" stroke="#2a2a2a" stroke-width="0.2">8</text>
<rect x="877.83" y="124.1" width="1.2" height="3.3" fill="#aaaaaa" />
<rect x="881.18" y="122.3" width="1.2" height="5.1" fill="#aaaaaa" />
<rect x="884.52" y="124.1" width="1.2" height="3.3" fill="#aaaaaa" />
<rect x="887.87" y="120.1" width="1.2" height="7.3" fill="#a2a2a2" />
<rect x="891.22" y="124.1" width="1.2" height="3.3" fill="#aaaaaa" />
<rect x="894.56" y="122.3" width="1.2" height="5.1" fill="#aaaaaa" />
<rect x="897.91" y="124.1" width="1.2" height="3.3" fill="#aaaaaa" />
<rect x="901.26" y="118.2" width="1.2" height="9.2" fill="#a2a2a2" />
<rect x="904.61" y="124.1" width="1.2" height="3.3" fill="#aaaaaa" />
<rect x="907.96" y="122.3" width="1.2" height="5.1" fill="#aaaaaa" />
<rect x="911.3" y="124.1" width="1.2" height="3.3" fill="#aaaaaa" />
<rect x="914.65" y="120.1" width="1.2" height="7.3" fill="#a2a2a2" />
<rect x="918.0" y="124.1" width="1.2" height="3.3" fill="#aaaaaa" />
<rect x="921.35" y="122.3" width="1.2" height="5.1" fill="#aaaaaa" />
<rect x="924.69" y="124.1" width="1.2" height="3.3" fill="#aaaaaa" />
<rect x="928.04" y="114.0" width="1.2" height="13.4" fill="#989898" />
<text x="930.3" y="122.9" font-size="9.1" fill="#2a2a2a" font-weight="normal" font-style="normal" textLength="4.6" lengthAdjust="spacingAndGlyphs" stroke="#2a2a2a" stroke-width="0.2">9</text>
<rect x="931.39" y="124.1" width="1.2" height="3.3" fill="#aaaaaa" />
<rect x="934.74" y="122.3" width="1.2" height="5.1" fill="#aaaaaa" />
<rect x="938.08" y="124.1" width="1.2" height="3.3" fill="#aaaaaa" />
<rect x="941.43" y="120.1" width="1.2" height="7.3" fill="#a2a2a2" />
<rect x="944.78" y="124.1" width="1.2" height="3.3" fill="#aaaaaa" />
<rect x="120.0" y="129.6" width="13.4" height="1.2" fill="#989898" />
<text transform="translate(127.8 135.9) rotate(-90)" font-size="9.1" fill="#2a2a2a" stroke="#2a2a2a" stroke-width="0.2" textLength="4.5" lengthAdjust="spacingAndGlyphs">8</text>
<rect x="130.1" y="132.95" width="3.3" height="1.2" fill="#aaaaaa" />
<rect x="128.3" y="136.29" width="5.1" height="1.2" fill="#aaaaaa" />
<rect x="130.1" y="139.64" width="3.3" height="1.2" fill="#aaaaaa" />
<rect x="126.1" y="142.99" width="7.3" height="1.2" fill="#a2a2a2" />
<rect x="130.1" y="146.34" width="3.3" height="1.2" fill="#aaaaaa" />
<rect x="128.3" y="149.69" width="5.1" height="1.2" fill="#aaaaaa" />
<rect x="130.1" y="153.03" width="3.3" height="1.2" fill="#aaaaaa" />
<rect x="124.2" y="156.38" width="9.2" height="1.2" fill="#a2a2a2" />
<rect x="130.1" y="159.73" width="3.3" height="1.2" fill="#aaaaaa" />
<rect x="128.3" y="163.07" width="5.1" height="1.2" fill="#aaaaaa" />
<rect x="130.1" y="166.42" width="3.3" height="1.2" fill="#aaaaaa" />
<rect x="126.1" y="169.77" width="7.3" height="1.2" fill="#a2a2a2" />
<rect x="130.1" y="173.12" width="3.3" height="1.2" fill="#aaaaaa" />
<rect x="128.3" y="176.47" width="5.1" height="1.2" fill="#aaaaaa" />
<rect x="130.1" y="179.81" width="3.3" height="1.2" fill="#aaaaaa" />
<rect x="120.0" y="183.16" width="13.4" height="1.2" fill="#989898" />
<text transform="translate(127.8 189.5) rotate(-90)" font-size="9.1" fill="#2a2a2a" stroke="#2a2a2a" stroke-width="0.2" textLength="4.5" lengthAdjust="spacingAndGlyphs">7</text>
<rect x="130.1" y="186.51" width="3.3" height="1.2" fill="#aaaaaa" />
<rect x="128.3" y="189.85" width="5.1" height="1.2" fill="#aaaaaa" />
<rect x="130.1" y="193.2" width="3.3" height="1.2" fill="#aaaaaa" />
<rect x="126.1" y="196.55" width="7.3" height="1.2" fill="#a2a2a2" />
<rect x="130.1" y="199.9" width="3.3" height="1.2" fill="#aaaaaa" />
<rect x="128.3" y="203.25" width="5.1" height="1.2" fill="#aaaaaa" />
<rect x="130.1" y="206.59" width="3.3" height="1.2" fill="#aaaaaa" />
<rect x="124.2" y="209.94" width="9.2" height="1.2" fill="#a2a2a2" />
<rect x="130.1" y="213.29" width="3.3" height="1.2" fill="#aaaaaa" />
<rect x="128.3" y="216.63" width="5.1" height="1.2" fill="#aaaaaa" />
<rect x="130.1" y="219.98" width="3.3" height="1.2" fill="#aaaaaa" />
<rect x="126.1" y="223.33" width="7.3" height="1.2" fill="#a2a2a2" />
<rect x="130.1" y="226.68" width="3.3" height="1.2" fill="#aaaaaa" />
<rect x="128.3" y="230.03" width="5.1" height="1.2" fill="#aaaaaa" />
<rect x="130.1" y="233.37" width="3.3" height="1.2" fill="#aaaaaa" />
<rect x="120.0" y="236.72" width="13.4" height="1.2" fill="#989898" />
<text transform="translate(127.8 243.0) rotate(-90)" font-size="9.1" fill="#2a2a2a" stroke="#2a2a2a" stroke-width="0.2" textLength="4.5" lengthAdjust="spacingAndGlyphs">6</text>
<rect x="130.1" y="240.07" width="3.3" height="1.2" fill="#aaaaaa" />
<rect x="128.3" y="243.41" width="5.1" height="1.2" fill="#aaaaaa" />
<rect x="130.1" y="246.76" width="3.3" height="1.2" fill="#aaaaaa" />
<rect x="126.1" y="250.11" width="7.3" height="1.2" fill="#a2a2a2" />
<rect x="130.1" y="253.46" width="3.3" height="1.2" fill="#aaaaaa" />
<rect x="128.3" y="256.8" width="5.1" height="1.2" fill="#aaaaaa" />
<rect x="130.1" y="260.15" width="3.3" height="1.2" fill="#aaaaaa" />
<rect x="124.2" y="263.5" width="9.2" height="1.2" fill="#a2a2a2" />
<rect x="130.1" y="266.85" width="3.3" height="1.2" fill="#aaaaaa" />
<rect x="128.3" y="270.19" width="5.1" height="1.2" fill="#aaaaaa" />
<rect x="130.1" y="273.54" width="3.3" height="1.2" fill="#aaaaaa" />
<rect x="126.1" y="276.89" width="7.3" height="1.2" fill="#a2a2a2" />
<rect x="130.1" y="280.24" width="3.3" height="1.2" fill="#aaaaaa" />
<rect x="128.3" y="283.58" width="5.1" height="1.2" fill="#aaaaaa" />
<rect x="130.1" y="286.93" width="3.3" height="1.2" fill="#aaaaaa" />
<rect x="120.0" y="290.28" width="13.4" height="1.2" fill="#989898" />
<text transform="translate(127.8 296.6) rotate(-90)" font-size="9.1" fill="#2a2a2a" stroke="#2a2a2a" stroke-width="0.2" textLength="4.5" lengthAdjust="spacingAndGlyphs">5</text>
<rect x="130.1" y="293.63" width="3.3" height="1.2" fill="#aaaaaa" />
<rect x="128.3" y="296.97" width="5.1" height="1.2" fill="#aaaaaa" />
<rect x="130.1" y="300.32" width="3.3" height="1.2" fill="#aaaaaa" />
<rect x="126.1" y="303.67" width="7.3" height="1.2" fill="#a2a2a2" />
<rect x="130.1" y="307.02" width="3.3" height="1.2" fill="#aaaaaa" />
<rect x="128.3" y="310.37" width="5.1" height="1.2" fill="#aaaaaa" />
<rect x="130.1" y="313.71" width="3.3" height="1.2" fill="#aaaaaa" />
<rect x="124.2" y="317.06" width="9.2" height="1.2" fill="#a2a2a2" />
<rect x="130.1" y="320.41" width="3.3" height="1.2" fill="#aaaaaa" />
<rect x="128.3" y="323.75" width="5.1" height="1.2" fill="#aaaaaa" />
<rect x="130.1" y="327.1" width="3.3" height="1.2" fill="#aaaaaa" />
<rect x="126.1" y="330.45" width="7.3" height="1.2" fill="#a2a2a2" />
<rect x="130.1" y="333.8" width="3.3" height="1.2" fill="#aaaaaa" />
<rect x="128.3" y="337.14" width="5.1" height="1.2" fill="#aaaaaa" />
<rect x="130.1" y="340.49" width="3.3" height="1.2" fill="#aaaaaa" />
<rect x="120.0" y="343.84" width="13.4" height="1.2" fill="#989898" />
<text transform="translate(127.8 350.1) rotate(-90)" font-size="9.1" fill="#2a2a2a" stroke="#2a2a2a" stroke-width="0.2" textLength="4.5" lengthAdjust="spacingAndGlyphs">4</text>
<rect x="130.1" y="347.19" width="3.3" height="1.2" fill="#aaaaaa" />
<rect x="128.3" y="350.53" width="5.1" height="1.2" fill="#aaaaaa" />
<rect x="130.1" y="353.88" width="3.3" height="1.2" fill="#aaaaaa" />
<rect x="126.1" y="357.23" width="7.3" height="1.2" fill="#a2a2a2" />
<rect x="130.1" y="360.58" width="3.3" height="1.2" fill="#aaaaaa" />
<rect x="128.3" y="363.92" width="5.1" height="1.2" fill="#aaaaaa" />
<rect x="130.1" y="367.27" width="3.3" height="1.2" fill="#aaaaaa" />
<rect x="124.2" y="370.62" width="9.2" height="1.2" fill="#a2a2a2" />
<rect x="130.1" y="373.97" width="3.3" height="1.2" fill="#aaaaaa" />
<rect x="128.3" y="377.31" width="5.1" height="1.2" fill="#aaaaaa" />
<rect x="130.1" y="380.66" width="3.3" height="1.2" fill="#aaaaaa" />
<rect x="126.1" y="384.01" width="7.3" height="1.2" fill="#a2a2a2" />
<rect x="130.1" y="387.36" width="3.3" height="1.2" fill="#aaaaaa" />
<rect x="128.3" y="390.7" width="5.1" height="1.2" fill="#aaaaaa" />
<rect x="130.1" y="394.05" width="3.3" height="1.2" fill="#aaaaaa" />
<rect x="120.0" y="397.4" width="13.4" height="1.2" fill="#989898" />
<text transform="translate(127.8 403.7) rotate(-90)" font-size="9.1" fill="#2a2a2a" stroke="#2a2a2a" stroke-width="0.2" textLength="4.5" lengthAdjust="spacingAndGlyphs">3</text>
<rect x="130.1" y="400.75" width="3.3" height="1.2" fill="#aaaaaa" />
<rect x="128.3" y="404.09" width="5.1" height="1.2" fill="#aaaaaa" />
<rect x="130.1" y="407.44" width="3.3" height="1.2" fill="#aaaaaa" />
<defs><linearGradient id="psh" x1="0" x2="1"><stop offset="0" stop-color="#e9e9e9" stop-opacity="0"/><stop offset="1" stop-color="#c8c8cc"/></linearGradient></defs>
<defs><linearGradient id="wsg" x1="0" y1="0" x2="0" y2="1"><stop offset="0" stop-color="#ececec"/><stop offset="1" stop-color="#e7e7e7"/></linearGradient></defs>
<rect x="134.9" y="128.6" width="311.5" height="282.4" fill="url(#wsg)" />
<rect x="443.5" y="128.5" width="3" height="282.5" fill="url(#psh)" />
<rect x="446.2" y="128.5" width="1.3" height="282.5" fill="#9ea3ad" />
<rect x="447.5" y="128.5" width="500.5" height="282.5" fill="#fff" />
<line x1="460.4" y1="128.6" x2="460.4" y2="411" stroke="#e2e2e2" stroke-width="1" stroke-dasharray="4 1.6"/>
<circle cx="643.8" cy="306.85" r="97.0" fill="#77f9fc" stroke="#d8cccf" stroke-width="0.9"/>
<circle cx="743.9" cy="306.85" r="97.0" fill="#f4f880" stroke="#d4d4c4" stroke-width="0.9"/>
<rect x="646.5" y="223.8" width="95.1" height="166.8" fill="#fff" stroke="#7a7a7a" stroke-width="1" stroke-dasharray="1.5 2.1"/>
<text x="609.9" y="309.8" font-size="7.2" fill="#000" font-weight="normal" font-style="normal" textLength="21.2" lengthAdjust="spacingAndGlyphs" stroke="#000" stroke-width="0.15">Insects</text>
<text x="678.8" y="309.9" font-size="7.2" fill="#3a3a3a" font-weight="normal" font-style="normal" textLength="30.2" lengthAdjust="spacingAndGlyphs"  stroke="#3a3a3a" stroke-width="0.22">Arthopods</text>
<text x="752.8" y="309.8" font-size="7.2" fill="#000" font-weight="normal" font-style="normal" textLength="29.5" lengthAdjust="spacingAndGlyphs" stroke="#000" stroke-width="0.15">Arachnids</text>
<path d="M677.7 310.3l1.35 -1.5l1.35 1.5l1.35 -1.5l1.35 1.5l1.35 -1.5l1.35 1.5l1.35 -1.5l1.35 1.5l1.35 -1.5l1.35 1.5l1.35 -1.5l1.35 1.5l1.35 -1.5l1.35 1.5l1.35 -1.5l1.35 1.5l1.35 -1.5l1.35 1.5l1.35 -1.5l1.35 1.5l1.35 -1.5l1.35 1.5l1.35 -1.5l1.35 1.5" fill="none" stroke="#e81c1c" stroke-width="0.9" />
</svg>
</div>
</body></html>
